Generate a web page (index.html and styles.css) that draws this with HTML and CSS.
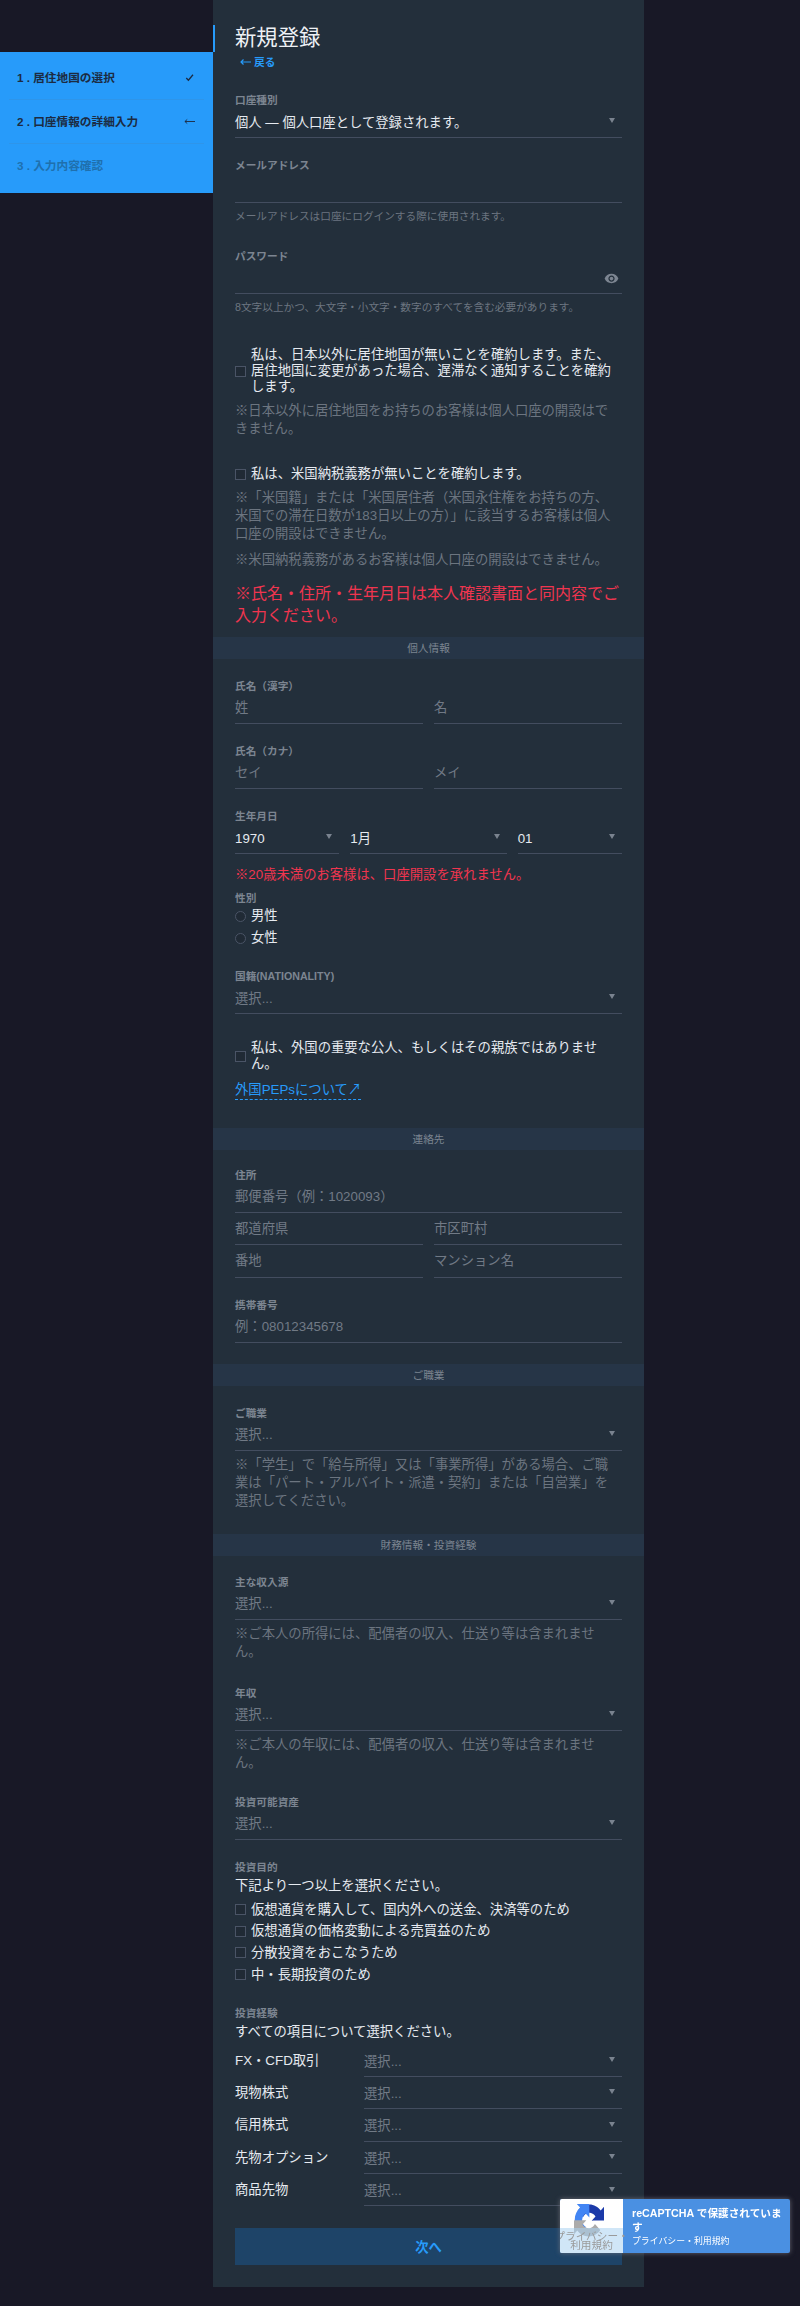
FILE: index.html
```html
<!DOCTYPE html>
<html lang="ja">
<head>
<meta charset="utf-8">
<title>新規登録</title>
<link rel="stylesheet" href="styles.css">
</head>
<body>
<div class="page">
  <aside class="side">
    <ol class="steps">
      <li class="step"><span>1 . 居住地国の選択</span>
        <svg class="step-icon" viewBox="0 0 12 12"><path d="M2.500 6.500 4.800 9 9.800 3" fill="none" stroke="currentColor" stroke-width="1.400"/></svg></li>
      <li class="step"><span>2 . 口座情報の詳細入力</span>
        <svg class="step-icon" viewBox="0 0 12 12"><path d="M12 6H1M3.500 3.800 1 6l2.500 2.200" fill="none" stroke="currentColor" stroke-width="1"/></svg></li>
      <li class="step step-off"><span>3 . 入力内容確認</span></li>
    </ol>
  </aside>

  <main class="panel">
    <div class="inner">
      <h1 class="title">新規登録</h1>
      <a class="back"><svg class="back-arrow" viewBox="0 0 11 8"><path d="M11 4H1M3.500 1.500 1 4l2.500 2.500" fill="none" stroke="currentColor" stroke-width="1.200"/></svg>戻る</a>

      <div class="field mt22">
        <div class="label">口座種別</div>
        <div class="control select value"><span>個人 — 個人口座として登録されます。</span></div>
      </div>
      <div class="field mt19">
        <div class="label">メールアドレス</div>
        <div class="control"></div>
        <div class="help">メールアドレスは口座にログインする際に使用されます。</div>
      </div>
      <div class="field mt24">
        <div class="label">パスワード</div>
        <div class="control eye-row">
          <svg class="eye" viewBox="0 0 24 24"><path fill="currentColor" d="M12 4.500C7 4.500 2.700 7.600 1 12c1.700 4.400 6 7.500 11 7.500s9.300-3.100 11-7.500c-1.700-4.400-6-7.500-11-7.500zM12 17c-2.800 0-5-2.200-5-5s2.200-5 5-5 5 2.200 5 5-2.200 5-5 5zm0-8c-1.700 0-3 1.300-3 3s1.300 3 3 3 3-1.300 3-3-1.300-3-3-3z"/></svg>
        </div>
        <div class="help">8文字以上かつ、大文字・小文字・数字のすべてを含む必要があります。</div>
      </div>

      <label class="check mt32"><span class="box"></span><span>私は、日本以外に居住地国が無いことを確約します。また、居住地国に変更があった場合、遅滞なく通知することを確約します。</span></label>
      <p class="note mt7">※日本以外に居住地国をお持ちのお客様は個人口座の開設はできません。</p>
      <label class="check mt28"><span class="box"></span><span>私は、米国納税義務が無いことを確約します。</span></label>
      <p class="note mt7">※「米国籍」または「米国居住者（米国永住権をお持ちの方、米国での滞在日数が183日以上の方）」に該当するお客様は個人口座の開設はできません。</p>
      <p class="note mt8">※米国納税義務があるお客様は個人口座の開設はできません。</p>
      <p class="alert mt14">※氏名・住所・生年月日は本人確認書面と同内容でご入力ください。</p>
    </div>

    <h2 class="band mt11">個人情報</h2>
    <div class="inner">
      <div class="field mt19">
        <div class="label">氏名（漢字）</div>
        <div class="cols2">
          <div class="control hint">姓</div>
          <div class="control hint">名</div>
        </div>
      </div>
      <div class="field mt19">
        <div class="label">氏名（カナ）</div>
        <div class="cols2">
          <div class="control hint">セイ</div>
          <div class="control hint">メイ</div>
        </div>
      </div>
      <div class="field mt19">
        <div class="label">生年月日</div>
        <div class="cols3">
          <div class="control select value"><span>1970</span></div>
          <div class="control select value"><span>1月</span></div>
          <div class="control select value"><span>01</span></div>
        </div>
      </div>
      <p class="alert-small mt12">※20歳未満のお客様は、口座開設を承れません。</p>
      <div class="label label-tight mt8">性別</div>
      <label class="radio"><span class="dot"></span><span>男性</span></label>
      <label class="radio"><span class="dot"></span><span>女性</span></label>
      <div class="field mt19">
        <div class="label">国籍(NATIONALITY)</div>
        <div class="control select hint"><span>選択...</span></div>
      </div>
      <label class="check mt26"><span class="box"></span><span>私は、外国の重要な公人、もしくはその親族ではありません。</span></label>
      <p class="mt9"><a class="pep">外国PEPsについて↗</a></p>
    </div>

    <h2 class="band mt28">連絡先</h2>
    <div class="inner">
      <div class="field mt17">
        <div class="label">住所</div>
        <div class="control hint">郵便番号（例：1020093）</div>
        <div class="cols2">
          <div class="control control-short hint">都道府県</div>
          <div class="control control-short hint">市区町村</div>
          <div class="control control-short hint">番地</div>
          <div class="control control-short hint">マンション名</div>
        </div>
      </div>
      <div class="field mt19">
        <div class="label">携帯番号</div>
        <div class="control hint">例：08012345678</div>
      </div>
    </div>

    <h2 class="band mt21">ご職業</h2>
    <div class="inner">
      <div class="field mt19">
        <div class="label">ご職業</div>
        <div class="control select hint"><span>選択...</span></div>
      </div>
      <p class="note mt5">※「学生」で「給与所得」又は「事業所得」がある場合、ご職業は「パート・アルバイト・派遣・契約」または「自営業」を選択してください。</p>
    </div>

    <h2 class="band mt24">財務情報・投資経験</h2>
    <div class="inner">
      <div class="field mt18">
        <div class="label">主な収入源</div>
        <div class="control select hint"><span>選択...</span></div>
      </div>
      <p class="note mt5">※ご本人の所得には、配偶者の収入、仕送り等は含まれません。</p>
      <div class="field mt24">
        <div class="label">年収</div>
        <div class="control select hint"><span>選択...</span></div>
      </div>
      <p class="note mt5">※ご本人の年収には、配偶者の収入、仕送り等は含まれません。</p>
      <div class="field mt22">
        <div class="label">投資可能資産</div>
        <div class="control select hint"><span>選択...</span></div>
      </div>
      <div class="label mt19">投資目的</div>
      <p class="lead">下記より一つ以上を選択ください。</p>
      <div class="checks">
        <label class="check"><span class="box"></span><span>仮想通貨を購入して、国内外への送金、決済等のため</span></label>
        <label class="check"><span class="box"></span><span>仮想通貨の価格変動による売買益のため</span></label>
        <label class="check"><span class="box"></span><span>分散投資をおこなうため</span></label>
        <label class="check"><span class="box"></span><span>中・長期投資のため</span></label>
      </div>
      <div class="label mt20">投資経験</div>
      <p class="lead">すべての項目について選択ください。</p>
      <div class="exp">
        <div class="exp-name">FX・CFD取引</div>
        <div class="control control-exp select hint"><span>選択...</span></div>
        <div class="exp-name">現物株式</div>
        <div class="control control-exp select hint"><span>選択...</span></div>
        <div class="exp-name">信用株式</div>
        <div class="control control-exp select hint"><span>選択...</span></div>
        <div class="exp-name">先物オプション</div>
        <div class="control control-exp select hint"><span>選択...</span></div>
        <div class="exp-name">商品先物</div>
        <div class="control control-exp select hint"><span>選択...</span></div>
      </div>
      <button class="next" type="button">次へ</button>
    </div>
  </main>
</div>

<div class="badge">
  <div class="badge-logo">
    <svg class="rc" viewBox="0 0 64 64" preserveAspectRatio="none">
      <path fill="#1c3aa9" d="M64 32c0-.5 0-.9 0-1.400V5.500l-7 7C51.300 5.600 42.600 1 32.800 1 22.600 1 13.600 5.900 7.900 13.400l11.500 11.600c1.100-2.100 2.700-3.900 4.600-5.300 2-1.600 4.800-2.900 8.800-2.900.5 0 .9.100 1.200.2 5 .4 9.300 3.200 11.800 7.200l-8.100 8.100c10.300 0 21.900 0 26.300-.1z"/>
      <path fill="#4285f4" d="M32.400 0c-.5 0-.9 0-1.400 0H6l7 7C6.100 12.700 1.500 21.400 1.500 31.200c0 10.200 4.900 19.200 12.400 24.900l11.600-11.500c-2.100-1.100-3.900-2.700-5.300-4.600-1.600-2-2.900-4.800-2.900-8.800 0-.5.100-.9.200-1.200.4-5 3.200-9.300 7.200-11.800l8.100 8.100C32.800 15.900 32.700 4.400 32.400 0z"/>
      <path fill="#ababab" d="M0 32c0 .5 0 .9 0 1.400v25.100l7-7c5.700 6.900 14.400 11.500 24.200 11.500 10.200 0 19.200-4.900 24.900-12.400L44.600 39c-1.100 2.100-2.700 3.900-4.600 5.300-2 1.600-4.800 2.900-8.800 2.900-.5 0-.9-.1-1.200-.2-5-.4-9.300-3.200-11.800-7.200l8.100-8.100C16 31.700 4.400 31.800 0 32z"/>
    </svg>
    <div class="badge-veil"><span>プライバシー・<br>利用規約</span></div>
  </div>
  <div class="badge-text">
    <div class="badge-title">reCAPTCHA で保護されています</div>
    <div class="badge-links">プライバシー・利用規約</div>
  </div>
</div>
</body>
</html>
```

FILE: styles.css
```css
* { box-sizing: border-box; }
html, body { margin: 0; padding: 0; }
body {
  background: #181826;
  color: #e6eaf0;
  font-family: "Liberation Sans", "Noto Sans CJK JP", sans-serif;
  font-size: 13.33px;
  line-height: 16px;
  min-height: 2306px;
}
h1, h2, p, ol { margin: 0; padding: 0; }
a { color: #279bfa; }

.page { display: flex; align-items: flex-start; width: 800px; }

/* sidebar */
.side { width: 213px; padding-top: 52px; flex: none; }
.steps {
  list-style: none;
  background: #279bfa;
  padding: 4px 9px 5px;
  color: #1c2b42;
  font-size: 11.67px;
  font-weight: 700;
}
.step {
  height: 44px;
  padding: 0 8px 0 8px;
  display: flex;
  align-items: center;
  justify-content: space-between;
  border-bottom: 1px solid #2e95ea;
}
.step:last-child { border-bottom: 0; }
.step-off { color: #1f70ae; }
.step-icon { width: 11px; height: 11px; display: block; margin-right: 1px; }

/* main panel */
.panel {
  width: 431px;
  flex: none;
  background: #232f3b;
  padding: 25px 0 22px;
  position: relative;
}
.panel::before {
  content: "";
  position: absolute;
  left: 0;
  top: 25px;
  width: 2px;
  height: 27px;
  background: #279bfa;
}
.inner { padding: 0 22px; }
.title { font-size: 21.33px; line-height: 27px; font-weight: 400; color: #eef1f5; }
.back {
  display: flex;
  align-items: center;
  gap: 3px;
  margin: 2px 0 0 5px;
  font-size: 10.67px;
  font-weight: 700;
  line-height: 16px;
}
.back-arrow { width: 11px; height: 8px; display: block; }

.label { font-size: 10.67px; line-height: 16px; font-weight: 700; color: #7c8591; }
.label-tight { line-height: 13px; }
.control {
  height: 30px;
  line-height: 28px;
  border-bottom: 1px solid #434d5f;
  font-size: 13.33px;
}
.control-short { height: 32.4px; line-height: 32px; }
.control-exp { height: 32.4px; padding-top: 3px; }
.value { color: #e6eaf0; }
.hint { color: #717a86; }
.select { display: flex; justify-content: space-between; align-items: center; padding-right: 7px; }
.select::after {
  content: "";
  width: 0;
  height: 0;
  border-left: 3px solid transparent;
  border-right: 3px solid transparent;
  border-top: 5px solid #7a838f;
  margin-bottom: 4px;
}
.eye-row { display: flex; justify-content: flex-end; align-items: center; padding-right: 3px; }
.eye { width: 15px; height: 15px; color: #7c8591; display: block; }
.help { font-size: 10.67px; line-height: 16px; color: #6c7580; margin-top: 5px; }

.cols2 { display: grid; grid-template-columns: 1fr 1fr; column-gap: 11px; }
.cols3 { display: grid; grid-template-columns: 1fr 1.5fr 1fr; column-gap: 11px; }

.check { display: flex; align-items: center; gap: 5px; font-size: 13.33px; line-height: 16px; color: #e6eaf0; }
.box { flex: none; width: 11px; height: 11px; border: 1px solid #4a5466; background: #202a35; }
.radio { display: flex; align-items: center; gap: 5px; height: 22px; font-size: 13.33px; color: #e6eaf0; }
.dot { flex: none; width: 11px; height: 11px; border-radius: 50%; border: 1px solid #4a5466; background: #202a35; }
.checks { margin-top: 2px; }
.checks .check { height: 21.67px; }
.note { font-size: 13.33px; line-height: 18px; color: #6c7580; padding-right: 1px; }
.alert { font-size: 16px; line-height: 21.5px; color: #f0354f; }
.alert-small { font-size: 13.33px; line-height: 18px; color: #f0354f; }
.lead { font-size: 13.33px; line-height: 22px; color: #e6eaf0; }
.pep {
  display: inline-block;
  font-size: 13.33px;
  line-height: 18px;
  border-bottom: 1px dashed #279bfa;
}
.band {
  height: 22px;
  line-height: 22px;
  background: #263547;
  color: #7c8591;
  font-size: 10.67px;
  font-weight: 400;
  text-align: center;
}
.exp { display: grid; grid-template-columns: 1fr 2fr; align-items: center; margin-top: 1px; }
.exp-name { font-size: 13.33px; line-height: 16px; color: #e6eaf0; }
.next {
  display: block;
  width: 100%;
  height: 37px;
  margin-top: 22px;
  background: #1e4468;
  border: 0;
  color: #279bfa;
  font: 700 13.33px "Liberation Sans", "Noto Sans CJK JP", sans-serif;
}

.mt5 { margin-top: 5px; }
.mt7 { margin-top: 7px; }
.mt8 { margin-top: 8px; }
.mt9 { margin-top: 9px; }
.mt11 { margin-top: 11px; }
.mt12 { margin-top: 12px; }
.mt14 { margin-top: 14px; }
.mt17 { margin-top: 17px; }
.mt18 { margin-top: 18px; }
.mt19 { margin-top: 19px; }
.mt20 { margin-top: 20px; }
.mt21 { margin-top: 21px; }
.mt22 { margin-top: 22px; }
.mt24 { margin-top: 24px; }
.mt26 { margin-top: 26px; }
.mt28 { margin-top: 28px; }
.mt32 { margin-top: 32px; }

/* recaptcha badge, floats over the page */
.badge {
  position: fixed;
  right: 10px;
  bottom: 53px;
  width: 230px;
  height: 54px;
  display: flex;
  background: #4a90e2;
  box-shadow: 0 0 5px rgba(120, 120, 130, .8);
  color: #fff;
  border-radius: 2px;
  overflow: hidden;
}
.badge-logo { width: 63px; flex: none; background: #fff; position: relative; }
.rc { position: absolute; left: 14px; top: 5px; width: 30px; height: 33px; display: block; }
.badge-veil {
  position: absolute;
  left: 0;
  right: 0;
  bottom: 0;
  height: 25px;
  background: rgba(170, 210, 240, .55);
  color: #9a9a9a;
  font-size: 10.67px;
  line-height: 9px;
  text-align: center;
  display: flex;
  align-items: center;
  justify-content: center;
  white-space: nowrap;
}
.badge-text { padding: 7px 8px 0 9px; flex: 1; min-width: 0; }
.badge-title { font-size: 10.67px; line-height: 14px; font-weight: 700; }
.badge-links { font-size: 8.89px; line-height: 12px; margin-top: 1px; }
```
